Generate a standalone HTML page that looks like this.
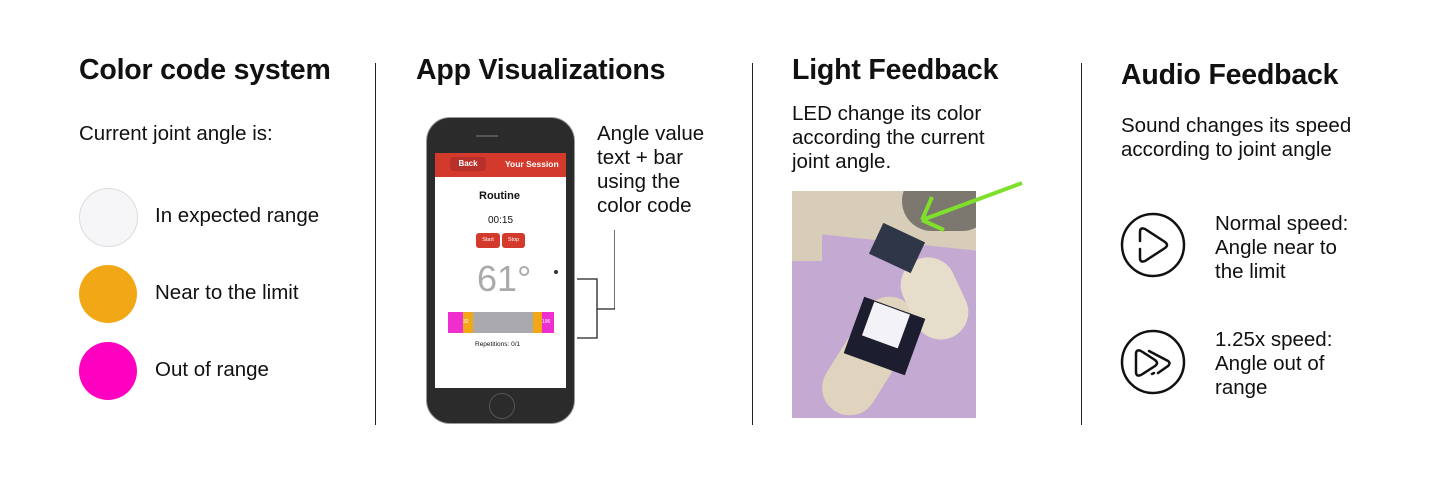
<!DOCTYPE html>
<html><head><meta charset="utf-8"><style>
body{margin:0;width:1448px;height:482px;background:#fff;position:relative;overflow:hidden;font-family:"Liberation Sans",sans-serif;color:#111}
.a{position:absolute;white-space:nowrap}
h1{position:absolute;margin:0;font-size:28.5px;font-weight:bold;white-space:nowrap;letter-spacing:-0.2px}
.t{font-size:20.5px;line-height:24px}
.vl{position:absolute;width:1px;background:#222;top:63px;height:362px}
.c{position:absolute;width:58px;height:58px;border-radius:50%;left:79px}
</style></head><body>
<h1 style="left:79px;top:54px">Color code system</h1>
<div class="a t" style="left:79px;top:122px">Current joint angle is:</div>
<div class="c" style="top:188px;background:#f6f5f7;border:1px solid #ddd;width:57px;height:57px"></div>
<div class="c" style="top:265px;background:#f2a816"></div>
<div class="c" style="top:342px;background:#ff00c0"></div>
<div class="a t" style="left:155px;top:204px">In expected range</div>
<div class="a t" style="left:155px;top:281px">Near to the limit</div>
<div class="a t" style="left:155px;top:358px">Out of range</div>
<div class="vl" style="left:375px"></div>

<h1 style="left:416px;top:54px">App Visualizations</h1>
<div class="a" style="left:426px;top:117px;width:149px;height:307px;background:#2b2b2b;border-radius:24px;border:1px solid #999;box-sizing:border-box"></div>
<div class="a" style="left:476px;top:135px;width:22px;height:2px;background:#555"></div>
<div class="a" style="left:489px;top:393px;width:24px;height:24px;border-radius:50%;border:1px solid #555"></div>
<div class="a" style="left:435px;top:153px;width:131px;height:235px;background:#fff"></div>
<div class="a" style="left:435px;top:153px;width:131px;height:24px;background:#d33a2c"></div>
<div class="a" style="left:450px;top:157px;width:36px;height:14px;background:#b8302a;border-radius:4px;color:#fff;font-size:8px;font-weight:bold;text-align:center;line-height:14px">Back</div>
<div class="a" style="left:505px;top:159px;color:#fff;font-size:8.5px;font-weight:bold">Your Session</div>
<div class="a" style="left:479px;top:190px;font-size:11px;font-weight:bold">Routine</div>
<div class="a" style="left:488px;top:215px;font-size:10px">00:15</div>
<div class="a" style="left:476px;top:233px;width:24px;height:15px;background:#d33a2c;border-radius:3px;color:#fff;font-size:5.5px;text-align:center;line-height:15px">Start</div>
<div class="a" style="left:502px;top:233px;width:23px;height:15px;background:#d33a2c;border-radius:3px;color:#fff;font-size:5.5px;text-align:center;line-height:15px">Stop</div>
<div class="a" style="left:477px;top:258px;font-size:36px;color:#aaa">61°</div>
<div class="a" style="left:554px;top:270px;width:4px;height:4px;border-radius:50%;background:#333"></div>
<div class="a" style="left:448px;top:312px;width:106px;height:21px;background:#aaa9ad"></div>
<div class="a" style="left:448px;top:312px;width:15px;height:21px;background:#ee2ecf"></div>
<div class="a" style="left:463px;top:312px;width:10px;height:21px;background:#f2a816;color:#fff;font-size:5px;line-height:21px">32</div>
<div class="a" style="left:533px;top:312px;width:9px;height:21px;background:#f2a816"></div>
<div class="a" style="left:542px;top:312px;width:12px;height:21px;background:#ee2ecf;color:#fff;font-size:5px;line-height:21px">196</div>
<div class="a" style="left:475px;top:341px;font-size:6.5px">Repetitions: 0/1</div>
<svg class="a" style="left:575px;top:225px" width="40" height="120"><path d="M2 54H22V113H2M22 84H40V5" fill="none" stroke="#222" stroke-width="1.3"/></svg>
<div class="a t" style="left:597px;top:122px">Angle value<br>text + bar<br>using the<br>color code</div>
<div class="vl" style="left:752px"></div>

<h1 style="left:792px;top:54px">Light Feedback</h1>
<div class="a t" style="left:792px;top:102px">LED change its color<br>according the current<br>joint angle.</div>
<div class="a" style="left:792px;top:191px;width:184px;height:227px;background:#c4a9d2;overflow:hidden">
 <div class="a" style="left:-20px;top:-30px;width:230px;height:80px;background:#d8cdb8;transform:rotate(6deg)"></div>
 <div class="a" style="left:110px;top:-20px;width:90px;height:60px;background:#7d786f;border-radius:30px"></div>
 <div class="a" style="left:-20px;top:40px;width:50px;height:30px;background:#d8cdb8"></div>
 <div class="a" style="left:50px;top:100px;width:55px;height:130px;background:#e0d4be;border-radius:28px;transform:rotate(32deg)"></div>
 <div class="a" style="left:115px;top:65px;width:55px;height:85px;background:#e6ddca;border-radius:28px;transform:rotate(-25deg)"></div>
 <div class="a" style="left:82px;top:40px;width:46px;height:34px;background:#2f3648;transform:rotate(25deg)"></div>
 <div class="a" style="left:60px;top:115px;width:65px;height:60px;background:#1c1d2f;transform:rotate(20deg)"></div>
 <div class="a" style="left:75px;top:116px;width:38px;height:36px;background:#f3f2f6;transform:rotate(20deg)"></div>
</div>
<svg class="a" style="left:905px;top:178px" width="120" height="60"><path d="M117 5L17 42M17 42L27 19M17 42L39 52" stroke="#7ee02a" stroke-width="4" fill="none"/></svg>
<div class="vl" style="left:1081px"></div>

<h1 style="left:1121px;top:59px">Audio Feedback</h1>
<div class="a t" style="left:1121px;top:114px">Sound changes its speed<br>according to joint angle</div>
<svg class="a" style="left:1120px;top:212px" width="66" height="66"><circle cx="33" cy="33" r="31" fill="none" stroke="#111" stroke-width="2.5"/><path d="M20 29V20Q20 15 25 17L45 30Q49 33 45 36L25 49Q20 51 20 46V37" fill="none" stroke="#111" stroke-width="2.5" stroke-linecap="round"/></svg>
<svg class="a" style="left:1120px;top:329px" width="66" height="66"><circle cx="33" cy="33" r="31" fill="none" stroke="#111" stroke-width="2.5"/><path d="M16 34V25Q16 20 21 22L35 31Q39 34 35 37L21 46Q16 48 16 43Z" fill="none" stroke="#111" stroke-width="2.5" stroke-linejoin="round"/><path d="M29 22L48 32Q51 34 48 37L38 44M34 44L32 45" fill="none" stroke="#111" stroke-width="2.5" stroke-linecap="round"/></svg>
<div class="a t" style="left:1215px;top:212px">Normal speed:<br>Angle near to<br>the limit</div>
<div class="a t" style="left:1215px;top:328px">1.25x speed:<br>Angle out of<br>range</div>
</body></html>
